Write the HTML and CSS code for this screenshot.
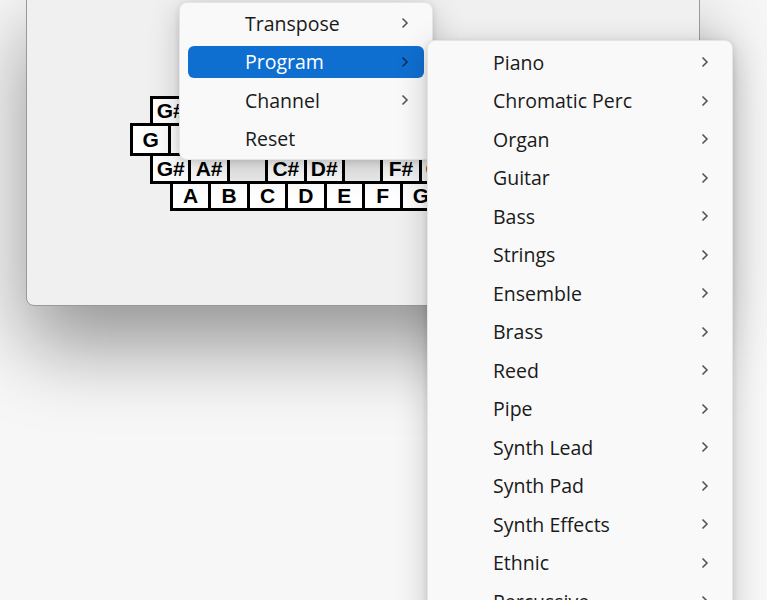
FILE: index.html
```html
<!DOCTYPE html>
<html lang="en">
<head>
    <meta charset="UTF-8">
    <title>Keyboard menu</title>
    <link rel="stylesheet" href="styles.css">
</head>
<body>

    <div class="window">
      <div class="keyboard">
        <div class="keyrow r1">
          <div class="key">G#</div><div class="key">A#</div><div class="key gap"></div>
          <div class="key">C#</div><div class="key">D#</div><div class="key gap"></div>
          <div class="key">F#</div><div class="key">G#</div>
        </div>
        <div class="keyrow r2">
          <div class="key">G</div><div class="key">A</div><div class="key">B</div><div class="key">C</div>
          <div class="key">D</div><div class="key">E</div><div class="key">F</div><div class="key">G</div>
        </div>
        <div class="keyrow r3">
          <div class="key">G#</div><div class="key">A#</div><div class="key gap"></div>
          <div class="key">C#</div><div class="key">D#</div><div class="key gap"></div>
          <div class="key">F#</div><div class="key">G#</div>
        </div>
        <div class="keyrow r4">
          <div class="key">A</div><div class="key">B</div><div class="key">C</div><div class="key">D</div>
          <div class="key">E</div><div class="key">F</div><div class="key">G</div><div class="key">A</div>
        </div>
      </div>
    </div>

    <!-- context menu -->
    <div class="menu main-menu">
      <div class="item">Transpose <svg class="chev" viewBox="0 0 8 12"><polyline points="1.5,1.5 6,6 1.5,10.5"/></svg></div>
      <div class="item active">Program <svg class="chev" viewBox="0 0 8 12"><polyline points="1.5,1.5 6,6 1.5,10.5"/></svg></div>
      <div class="item">Channel <svg class="chev" viewBox="0 0 8 12"><polyline points="1.5,1.5 6,6 1.5,10.5"/></svg></div>
      <div class="item">Reset</div>
    </div>

    <!-- submenu Program -->
    <div class="menu sub-menu">
      <div class="item">Piano <svg class="chev" viewBox="0 0 8 12"><polyline points="1.5,1.5 6,6 1.5,10.5"/></svg></div>
      <div class="item">Chromatic Perc <svg class="chev" viewBox="0 0 8 12"><polyline points="1.5,1.5 6,6 1.5,10.5"/></svg></div>
      <div class="item">Organ <svg class="chev" viewBox="0 0 8 12"><polyline points="1.5,1.5 6,6 1.5,10.5"/></svg></div>
      <div class="item">Guitar <svg class="chev" viewBox="0 0 8 12"><polyline points="1.5,1.5 6,6 1.5,10.5"/></svg></div>
      <div class="item">Bass <svg class="chev" viewBox="0 0 8 12"><polyline points="1.5,1.5 6,6 1.5,10.5"/></svg></div>
      <div class="item">Strings <svg class="chev" viewBox="0 0 8 12"><polyline points="1.5,1.5 6,6 1.5,10.5"/></svg></div>
      <div class="item">Ensemble <svg class="chev" viewBox="0 0 8 12"><polyline points="1.5,1.5 6,6 1.5,10.5"/></svg></div>
      <div class="item">Brass <svg class="chev" viewBox="0 0 8 12"><polyline points="1.5,1.5 6,6 1.5,10.5"/></svg></div>
      <div class="item">Reed <svg class="chev" viewBox="0 0 8 12"><polyline points="1.5,1.5 6,6 1.5,10.5"/></svg></div>
      <div class="item">Pipe <svg class="chev" viewBox="0 0 8 12"><polyline points="1.5,1.5 6,6 1.5,10.5"/></svg></div>
      <div class="item">Synth Lead <svg class="chev" viewBox="0 0 8 12"><polyline points="1.5,1.5 6,6 1.5,10.5"/></svg></div>
      <div class="item">Synth Pad <svg class="chev" viewBox="0 0 8 12"><polyline points="1.5,1.5 6,6 1.5,10.5"/></svg></div>
      <div class="item">Synth Effects <svg class="chev" viewBox="0 0 8 12"><polyline points="1.5,1.5 6,6 1.5,10.5"/></svg></div>
      <div class="item">Ethnic <svg class="chev" viewBox="0 0 8 12"><polyline points="1.5,1.5 6,6 1.5,10.5"/></svg></div>
      <div class="item">Percussive <svg class="chev" viewBox="0 0 8 12"><polyline points="1.5,1.5 6,6 1.5,10.5"/></svg></div>
    </div>

</body>
</html>
```

FILE: styles.css
```css
* {
    box-sizing: border-box;
}

html, body {
    margin: 0;
    height: 100%;
}

body {
    position: relative;
    overflow: hidden;
    background: #f7f7f7;
    font-family: "Open Sans", "Noto Sans", sans-serif;
}

/* app window behind the menus */
.window {
    margin: -10px 0 0 26px;
    width: 674px;
    height: 316px;
    padding-top: 105px;
    background: #f0f0f0;
    border: 1px solid #999;
    border-radius: 8px;
    box-shadow: 0 40px 80px rgba(0, 0, 0, 0.4);
}

.keyrow {
    display: flex;
}

.keyrow + .keyrow {
    margin-top: -3px;
}

.r1, .r3 { padding-left: 123px; }
.r2 { padding-left: 103px; }
.r4 { padding-left: 143px; }

.r1 .key { height: 30px; }
.r2 .key { height: 33px; }
.r3 .key { height: 31px; }
.r4 .key { height: 30px; }

.key {
    display: flex;
    align-items: center;
    justify-content: center;
    flex: none;
    width: 41.4px;
    margin-right: -3px;
    border: 3px solid #000;
    background: #fff;
    color: #000;
    font: bold 21px "Liberation Sans", Arial, sans-serif;
}

.key.gap {
    background: transparent;
    border-color: transparent;
}

/* MENUS */
.menu {
    position: absolute;
    display: flex;
    flex-direction: column;
    padding: 1px 0;
    background: #f9f9f9;
    border: 1px solid rgba(0, 0, 0, 0.08);
    border-radius: 8px;
    box-shadow: 0 2px 6px rgba(0, 0, 0, 0.12), 0 8px 32px rgba(0, 0, 0, 0.2);
}

.main-menu {
    left: 179px;
    top: 2px;
    width: 254px;
}

.sub-menu {
    left: 427px;
    top: 40px;
    width: 306px;
    padding-top: 2px;
}

.item {
    display: flex;
    align-items: center;
    flex: none;
    height: 32.5px;
    margin: 3px 8px;
    padding: 0 15px 0 57px;
    border-radius: 6px;
    font-size: 19.5px;
    color: #1a1a1a;
    white-space: nowrap;
}

.item.active {
    background: #0f6fd1;
    color: #fff;
}

.chev {
    margin-left: auto;
    width: 8px;
    height: 12px;
}

.chev polyline {
    fill: none;
    stroke: #555;
    stroke-width: 1.6;
}

.active .chev polyline {
    stroke: rgba(0, 0, 0, 0.55);
}
```
